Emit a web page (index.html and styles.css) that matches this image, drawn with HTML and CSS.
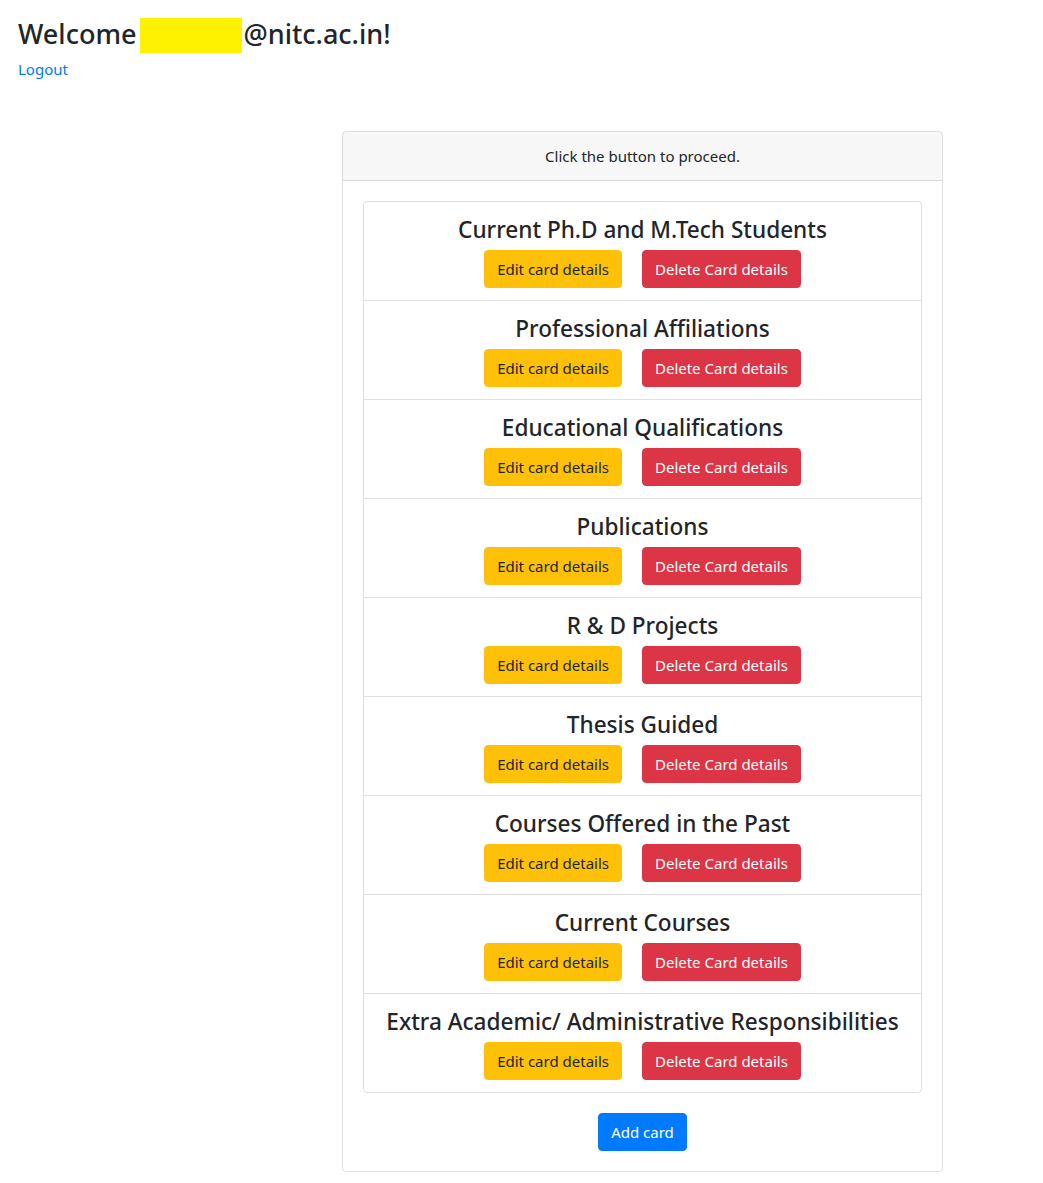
FILE: index.html
```html
<!DOCTYPE html>
<html lang="en">
<head>
<meta charset="utf-8">
<title>Dashboard</title>
<link rel="stylesheet" href="styles.css">
</head>
<body>
<header class="top">
  <h3 class="welcome">Welcome<span class="redact"></span>@nitc.ac.in!</h3>
  <a class="logout" href="#">Logout</a>
</header>
<main class="wrap">
  <section class="card">
    <div class="card-header">Click the button to proceed.</div>
    <div class="card-body">
      <ul class="list">
        <li class="item"><h4 class="title">Current Ph.D and M.Tech Students</h4><div class="actions"><button class="btn btn-warning">Edit card details</button><button class="btn btn-danger">Delete Card details</button></div></li>
        <li class="item"><h4 class="title">Professional Affiliations</h4><div class="actions"><button class="btn btn-warning">Edit card details</button><button class="btn btn-danger">Delete Card details</button></div></li>
        <li class="item"><h4 class="title">Educational Qualifications</h4><div class="actions"><button class="btn btn-warning">Edit card details</button><button class="btn btn-danger">Delete Card details</button></div></li>
        <li class="item"><h4 class="title">Publications</h4><div class="actions"><button class="btn btn-warning">Edit card details</button><button class="btn btn-danger">Delete Card details</button></div></li>
        <li class="item"><h4 class="title">R &amp; D Projects</h4><div class="actions"><button class="btn btn-warning">Edit card details</button><button class="btn btn-danger">Delete Card details</button></div></li>
        <li class="item"><h4 class="title">Thesis Guided</h4><div class="actions"><button class="btn btn-warning">Edit card details</button><button class="btn btn-danger">Delete Card details</button></div></li>
        <li class="item"><h4 class="title">Courses Offered in the Past</h4><div class="actions"><button class="btn btn-warning">Edit card details</button><button class="btn btn-danger">Delete Card details</button></div></li>
        <li class="item"><h4 class="title">Current Courses</h4><div class="actions"><button class="btn btn-warning">Edit card details</button><button class="btn btn-danger">Delete Card details</button></div></li>
        <li class="item"><h4 class="title">Extra Academic/ Administrative Responsibilities</h4><div class="actions"><button class="btn btn-warning">Edit card details</button><button class="btn btn-danger">Delete Card details</button></div></li>
      </ul>
      <div class="add-row"><button class="btn btn-primary">Add card</button></div>
    </div>
  </section>
</main>
</body>
</html>
```
FILE: styles.css
```css
* { box-sizing: border-box; }
body {
  margin: 0;
  font-family: "Noto Sans", "Open Sans", Arial, sans-serif;
  font-size: 16px;
  line-height: 1.5;
  color: #212529;
  background: #fff;
}
.top {
  padding: 18px 18px 0;
}
.welcome {
  margin: 0 0 4px;
  font-size: 27px;
  font-weight: 500;
  line-height: 1.2;
}
.redact {
  display: inline-block;
  width: 102px;
  height: 35px;
  margin: 0 1px 0 4px;
  background: #fff200;
  vertical-align: -9px;
}
.logout {
  color: #007bff;
  text-decoration: none;
  font-size: 15px;
  line-height: 24px;
}
.wrap {
  padding: 50px 0 0 342px;
}
.card {
  width: 601px;
  border: 1px solid rgba(0,0,0,.125);
  border-radius: 4px;
  margin-bottom: 12px;
}
.card-header {
  background: rgba(0,0,0,.03);
  border-bottom: 1px solid rgba(0,0,0,.125);
  padding: 12px 20px;
  text-align: center;
  font-size: 15px;
  line-height: 24px;
}
.card-body {
  padding: 20px;
}
.list {
  list-style: none;
  margin: 0;
  padding: 0;
  border: 1px solid rgba(0,0,0,.125);
  border-radius: 4px;
}
.item {
  padding: 12px 10px;
  text-align: center;
  border-top: 1px solid rgba(0,0,0,.125);
}
.item:first-child { border-top: 0; }
.title {
  margin: 0 0 6px;
  padding-top: 2px;
  font-size: 22.6px;
  font-weight: 500;
  line-height: 28px;
  white-space: nowrap;
}
.actions {
  display: flex;
  justify-content: center;
  gap: 20px;
}
.btn {
  font-family: inherit;
  font-size: 15px;
  line-height: 24px;
  padding: 6px 12px;
  border: 1px solid transparent;
  border-radius: 4px;
  cursor: pointer;
}
.btn-warning { background: #ffc107; border-color: #ffc107; color: #212529; }
.btn-danger { background: #dc3545; border-color: #dc3545; color: #fff; }
.btn-primary { background: #007bff; border-color: #007bff; color: #fff; }
.add-row {
  display: flex;
  justify-content: center;
  margin-top: 20px;
}
```
